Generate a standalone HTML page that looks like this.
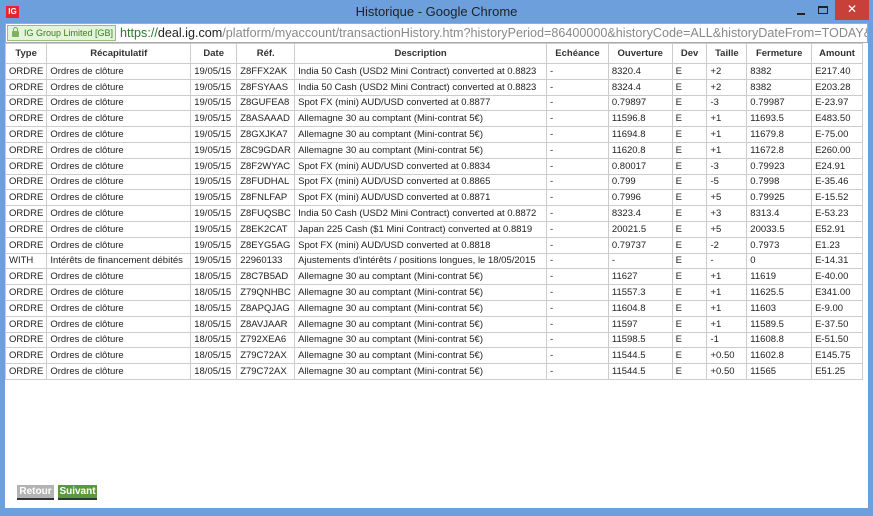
<!DOCTYPE html>
<html><head><meta charset="utf-8"><style>
*{margin:0;padding:0;box-sizing:border-box}
body{width:873px;height:516px;background:#6d9fdc;font-family:"Liberation Sans",Arial,sans-serif;position:relative;overflow:hidden}
#title{position:absolute;left:0;top:0;width:873px;height:22px;text-align:center;font-size:13px;line-height:24px;color:#222}
#logo{position:absolute;left:6px;top:6px;width:13px;height:12px;background:#e3262b;color:#fff;font-size:8px;font-weight:bold;line-height:12px;text-align:center}
#close{position:absolute;left:835px;top:0;width:34px;height:20px;background:#c7403a;color:#fff;text-align:center;font-size:12px;line-height:19px}
#min{position:absolute;left:797px;top:13px;width:8px;height:2px;background:#222}
#max{position:absolute;left:818px;top:6px;width:10px;height:8px;border:1px solid #222;border-top-width:2px}
#addr{position:absolute;left:5px;top:23px;width:863px;height:20px;background:#fff;border:1px solid #aaa;font-size:12.6px;line-height:18px;white-space:nowrap;overflow:hidden;color:#888}
#ev{display:inline-block;height:16px;margin:1px 4px 0 1px;padding:0 2px 0 16px;background:#e5f3dc;border:1px solid #8fc27a;color:#3a7a1e;font-size:9px;line-height:14px;vertical-align:top;position:relative}
#ev:before{content:"";position:absolute;left:4px;top:5px;width:7px;height:6px;background:#7fb061;border-radius:1px}
#ev:after{content:"";position:absolute;left:5px;top:1px;width:3px;height:4px;border:1px solid #7fb061;border-bottom:none;border-radius:3px 3px 0 0}
#content{position:absolute;left:5px;top:43px;width:863px;height:465px;background:#fff}
table{border-collapse:collapse;font-size:9.5px;color:#222;position:absolute;left:0;top:0;width:858px}
td,th{border:1px solid #ccc;height:15.8px;padding:0 3px;white-space:nowrap;text-align:left;font-weight:normal}
th{height:20px;text-align:center;font-weight:bold;color:#333}
.b{position:absolute;top:442px;height:15px;font-size:10px;font-weight:bold;color:#fff;line-height:14px;text-align:center;border-bottom:2px solid #333}
</style></head><body>
<div id="logo">IG</div>
<div id="title">Historique - Google Chrome</div>
<div id="min"></div><div id="max"></div><div id="close">✕</div>
<div id="addr"><span id="ev">IG Group Limited [GB]</span><span style="color:#2a7a2a">https://</span><span style="color:#222">deal.ig.com</span>/platform/myaccount/transactionHistory.htm?historyPeriod=86400000&amp;historyCode=ALL&amp;historyDateFrom=TODAY&amp;his</div>
<div id="content">
<table>
<colgroup><col style="width:41px"><col style="width:144px"><col style="width:46px"><col style="width:58px"><col style="width:252px"><col style="width:62px"><col style="width:64px"><col style="width:35px"><col style="width:40px"><col style="width:65px"><col style="width:51px"></colgroup>
<tr><th>Type</th><th>Récapitulatif</th><th>Date</th><th>Réf.</th><th>Description</th><th>Echéance</th><th>Ouverture</th><th>Dev</th><th>Taille</th><th>Fermeture</th><th>Amount</th></tr>
<tr><td>ORDRE</td><td>Ordres de clôture</td><td>19/05/15</td><td>Z8FFX2AK</td><td>India 50 Cash (USD2 Mini Contract) converted at 0.8823</td><td>-</td><td>8320.4</td><td>E</td><td>+2</td><td>8382</td><td>E217.40</td></tr>
<tr><td>ORDRE</td><td>Ordres de clôture</td><td>19/05/15</td><td>Z8FSYAAS</td><td>India 50 Cash (USD2 Mini Contract) converted at 0.8823</td><td>-</td><td>8324.4</td><td>E</td><td>+2</td><td>8382</td><td>E203.28</td></tr>
<tr><td>ORDRE</td><td>Ordres de clôture</td><td>19/05/15</td><td>Z8GUFEA8</td><td>Spot FX (mini) AUD/USD converted at 0.8877</td><td>-</td><td>0.79897</td><td>E</td><td>-3</td><td>0.79987</td><td>E-23.97</td></tr>
<tr><td>ORDRE</td><td>Ordres de clôture</td><td>19/05/15</td><td>Z8ASAAAD</td><td>Allemagne 30 au comptant (Mini-contrat 5€)</td><td>-</td><td>11596.8</td><td>E</td><td>+1</td><td>11693.5</td><td>E483.50</td></tr>
<tr><td>ORDRE</td><td>Ordres de clôture</td><td>19/05/15</td><td>Z8GXJKA7</td><td>Allemagne 30 au comptant (Mini-contrat 5€)</td><td>-</td><td>11694.8</td><td>E</td><td>+1</td><td>11679.8</td><td>E-75.00</td></tr>
<tr><td>ORDRE</td><td>Ordres de clôture</td><td>19/05/15</td><td>Z8C9GDAR</td><td>Allemagne 30 au comptant (Mini-contrat 5€)</td><td>-</td><td>11620.8</td><td>E</td><td>+1</td><td>11672.8</td><td>E260.00</td></tr>
<tr><td>ORDRE</td><td>Ordres de clôture</td><td>19/05/15</td><td>Z8F2WYAC</td><td>Spot FX (mini) AUD/USD converted at 0.8834</td><td>-</td><td>0.80017</td><td>E</td><td>-3</td><td>0.79923</td><td>E24.91</td></tr>
<tr><td>ORDRE</td><td>Ordres de clôture</td><td>19/05/15</td><td>Z8FUDHAL</td><td>Spot FX (mini) AUD/USD converted at 0.8865</td><td>-</td><td>0.799</td><td>E</td><td>-5</td><td>0.7998</td><td>E-35.46</td></tr>
<tr><td>ORDRE</td><td>Ordres de clôture</td><td>19/05/15</td><td>Z8FNLFAP</td><td>Spot FX (mini) AUD/USD converted at 0.8871</td><td>-</td><td>0.7996</td><td>E</td><td>+5</td><td>0.79925</td><td>E-15.52</td></tr>
<tr><td>ORDRE</td><td>Ordres de clôture</td><td>19/05/15</td><td>Z8FUQSBC</td><td>India 50 Cash (USD2 Mini Contract) converted at 0.8872</td><td>-</td><td>8323.4</td><td>E</td><td>+3</td><td>8313.4</td><td>E-53.23</td></tr>
<tr><td>ORDRE</td><td>Ordres de clôture</td><td>19/05/15</td><td>Z8EK2CAT</td><td>Japan 225 Cash ($1 Mini Contract) converted at 0.8819</td><td>-</td><td>20021.5</td><td>E</td><td>+5</td><td>20033.5</td><td>E52.91</td></tr>
<tr><td>ORDRE</td><td>Ordres de clôture</td><td>19/05/15</td><td>Z8EYG5AG</td><td>Spot FX (mini) AUD/USD converted at 0.8818</td><td>-</td><td>0.79737</td><td>E</td><td>-2</td><td>0.7973</td><td>E1.23</td></tr>
<tr><td>WITH</td><td>Intérêts de financement débités</td><td>19/05/15</td><td>22960133</td><td>Ajustements d'intérêts / positions longues, le 18/05/2015</td><td>-</td><td>-</td><td>E</td><td>-</td><td>0</td><td>E-14.31</td></tr>
<tr><td>ORDRE</td><td>Ordres de clôture</td><td>18/05/15</td><td>Z8C7B5AD</td><td>Allemagne 30 au comptant (Mini-contrat 5€)</td><td>-</td><td>11627</td><td>E</td><td>+1</td><td>11619</td><td>E-40.00</td></tr>
<tr><td>ORDRE</td><td>Ordres de clôture</td><td>18/05/15</td><td>Z79QNHBC</td><td>Allemagne 30 au comptant (Mini-contrat 5€)</td><td>-</td><td>11557.3</td><td>E</td><td>+1</td><td>11625.5</td><td>E341.00</td></tr>
<tr><td>ORDRE</td><td>Ordres de clôture</td><td>18/05/15</td><td>Z8APQJAG</td><td>Allemagne 30 au comptant (Mini-contrat 5€)</td><td>-</td><td>11604.8</td><td>E</td><td>+1</td><td>11603</td><td>E-9.00</td></tr>
<tr><td>ORDRE</td><td>Ordres de clôture</td><td>18/05/15</td><td>Z8AVJAAR</td><td>Allemagne 30 au comptant (Mini-contrat 5€)</td><td>-</td><td>11597</td><td>E</td><td>+1</td><td>11589.5</td><td>E-37.50</td></tr>
<tr><td>ORDRE</td><td>Ordres de clôture</td><td>18/05/15</td><td>Z792XEA6</td><td>Allemagne 30 au comptant (Mini-contrat 5€)</td><td>-</td><td>11598.5</td><td>E</td><td>-1</td><td>11608.8</td><td>E-51.50</td></tr>
<tr><td>ORDRE</td><td>Ordres de clôture</td><td>18/05/15</td><td>Z79C72AX</td><td>Allemagne 30 au comptant (Mini-contrat 5€)</td><td>-</td><td>11544.5</td><td>E</td><td>+0.50</td><td>11602.8</td><td>E145.75</td></tr>
<tr><td>ORDRE</td><td>Ordres de clôture</td><td>18/05/15</td><td>Z79C72AX</td><td>Allemagne 30 au comptant (Mini-contrat 5€)</td><td>-</td><td>11544.5</td><td>E</td><td>+0.50</td><td>11565</td><td>E51.25</td></tr>
</table>
<div class="b" style="left:12px;width:37px;background:#b3b3b3">Retour</div>
<div class="b" style="left:53px;width:39px;background:#5a9a3c">Suivant</div>
</div>
</body></html>
